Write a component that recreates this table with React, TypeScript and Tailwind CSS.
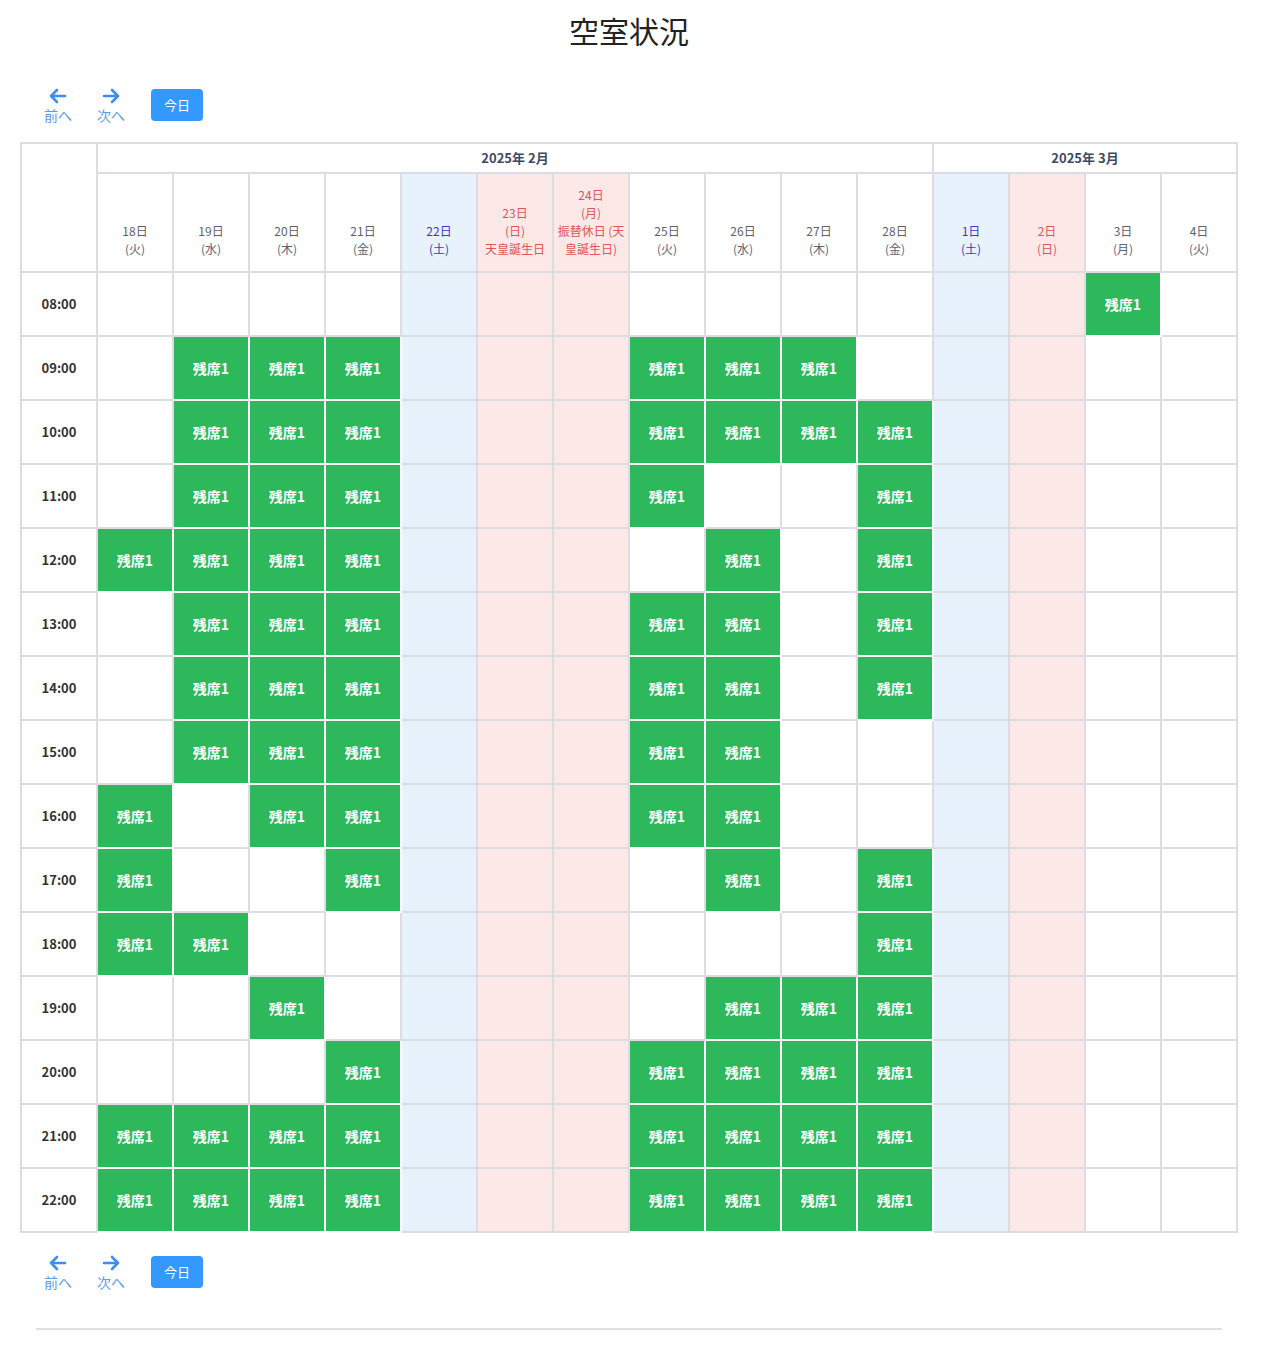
import React from "react";

type Day = { d: string; w: string; kind: "n" | "sat" | "hol"; extra?: string[] };

const days: Day[] = [
  { d: "18日", w: "(火)", kind: "n" },
  { d: "19日", w: "(水)", kind: "n" },
  { d: "20日", w: "(木)", kind: "n" },
  { d: "21日", w: "(金)", kind: "n" },
  { d: "22日", w: "(土)", kind: "sat" },
  { d: "23日", w: "(日)", kind: "hol", extra: ["天皇誕生日"] },
  { d: "24日", w: "(月)", kind: "hol", extra: ["振替休日 (天", "皇誕生日)"] },
  { d: "25日", w: "(火)", kind: "n" },
  { d: "26日", w: "(水)", kind: "n" },
  { d: "27日", w: "(木)", kind: "n" },
  { d: "28日", w: "(金)", kind: "n" },
  { d: "1日", w: "(土)", kind: "sat" },
  { d: "2日", w: "(日)", kind: "hol" },
  { d: "3日", w: "(月)", kind: "n" },
  { d: "4日", w: "(火)", kind: "n" },
];

const rows: [string, number[]][] = [
  ["08:00", [13]],
  ["09:00", [1, 2, 3, 7, 8, 9]],
  ["10:00", [1, 2, 3, 7, 8, 9, 10]],
  ["11:00", [1, 2, 3, 7, 10]],
  ["12:00", [0, 1, 2, 3, 8, 10]],
  ["13:00", [1, 2, 3, 7, 8, 10]],
  ["14:00", [1, 2, 3, 7, 8, 10]],
  ["15:00", [1, 2, 3, 7, 8]],
  ["16:00", [0, 2, 3, 7, 8]],
  ["17:00", [0, 3, 8, 10]],
  ["18:00", [0, 1, 10]],
  ["19:00", [2, 8, 9, 10]],
  ["20:00", [3, 7, 8, 9, 10]],
  ["21:00", [0, 1, 2, 3, 7, 8, 9, 10]],
  ["22:00", [0, 1, 2, 3, 7, 8, 9, 10]],
];

function Nav() {
  return (
    <div className="flex items-start pl-[24px]">
      <button className="flex w-[28px] flex-col items-center">
        <svg width="18" height="16" viewBox="0 0 18 16" fill="none" stroke="#3d8ef0" strokeWidth="2.6" strokeLinecap="round" strokeLinejoin="round">
          <path d="M16 8H2M8 2L2 8l6 6" />
        </svg>
        <span className="mt-[2px] text-[14px] leading-[18px] text-[#5a9be6]">前へ</span>
      </button>
      <button className="ml-[25px] flex w-[28px] flex-col items-center">
        <svg width="18" height="16" viewBox="0 0 18 16" fill="none" stroke="#3d8ef0" strokeWidth="2.6" strokeLinecap="round" strokeLinejoin="round">
          <path d="M2 8h14M10 2l6 6-6 6" />
        </svg>
        <span className="mt-[2px] text-[14px] leading-[18px] text-[#5a9be6]">次へ</span>
      </button>
      <button className="ml-[26px] mt-[1px] h-[32px] w-[52px] rounded-[4px] bg-[#3399ff] text-[13px] text-white">
        今日
      </button>
    </div>
  );
}

export default function App() {
  const border = "border-2 border-[#dcdde3]";
  return (
    <div
      className="min-h-[1350px] bg-white text-[#3c4b64]"
      style={{ fontFamily: '"Noto Sans CJK JP", "Noto Sans", sans-serif' }}
    >
      <div className="ml-[20px] w-[1218px]">
        <h1 className="pt-[9px] text-center text-[30px] font-normal leading-[42px] text-[#222]">空室状況</h1>
        <div className="mt-[37px]">
          <Nav />
        </div>
        <table className="mt-[18px] w-[1218px] table-fixed border-collapse">
          <thead>
            <tr>
              <th rowSpan={2} className={border}></th>
              <th colSpan={11} className={`${border} h-[30px] text-[13px] font-bold text-[#3c4b64]`}>
                2025年 2月
              </th>
              <th colSpan={4} className={`${border} h-[30px] text-[13px] font-bold text-[#3c4b64]`}>
                2025年 3月
              </th>
            </tr>
            <tr>
              {days.map((d, i) => {
                const bg = d.kind === "sat" ? "bg-[#e8f2fd]" : d.kind === "hol" ? "bg-[#fde8e8]" : "bg-white";
                const color = d.kind === "sat" ? "text-[#3b3bc4]" : d.kind === "hol" ? "text-[#e05555]" : "text-[#5b6270]";
                return (
                  <th
                    key={i}
                    className={`${border} ${bg} ${color} h-[99px] px-[2px] pb-[13px] align-bottom text-[12px] font-normal leading-[18px]`}
                  >
                    <div>{d.d}</div>
                    <div>{d.w}</div>
                    {d.extra?.map((e, j) => (
                      <div key={j} className="whitespace-nowrap">{e}</div>
                    ))}
                  </th>
                );
              })}
            </tr>
          </thead>
          <tbody>
            {rows.map(([t, g]) => (
              <tr key={t}>
                <td className={`${border} h-[64px] text-center text-[13px] font-bold text-[#333]`}>{t}</td>
                {days.map((d, i) => {
                  const green = g.includes(i);
                  const bg = green
                    ? "bg-[#2db85c] border-2 border-white"
                    : d.kind === "sat"
                    ? `bg-[#e8f2fd] ${border}`
                    : d.kind === "hol"
                    ? `bg-[#fde8e8] ${border}`
                    : `bg-white ${border}`;
                  return (
                    <td key={i} className={`${bg} h-[64px] text-center text-[14px] font-bold text-white`}>
                      {green ? "残席1" : ""}
                    </td>
                  );
                })}
              </tr>
            ))}
          </tbody>
        </table>
        <div className="mt-[22px]">
          <Nav />
        </div>
        <div className="ml-[16px] mt-[37px] h-[2px] w-[1186px] bg-[#e0e0e0]"></div>
      </div>
    </div>
  );
}
